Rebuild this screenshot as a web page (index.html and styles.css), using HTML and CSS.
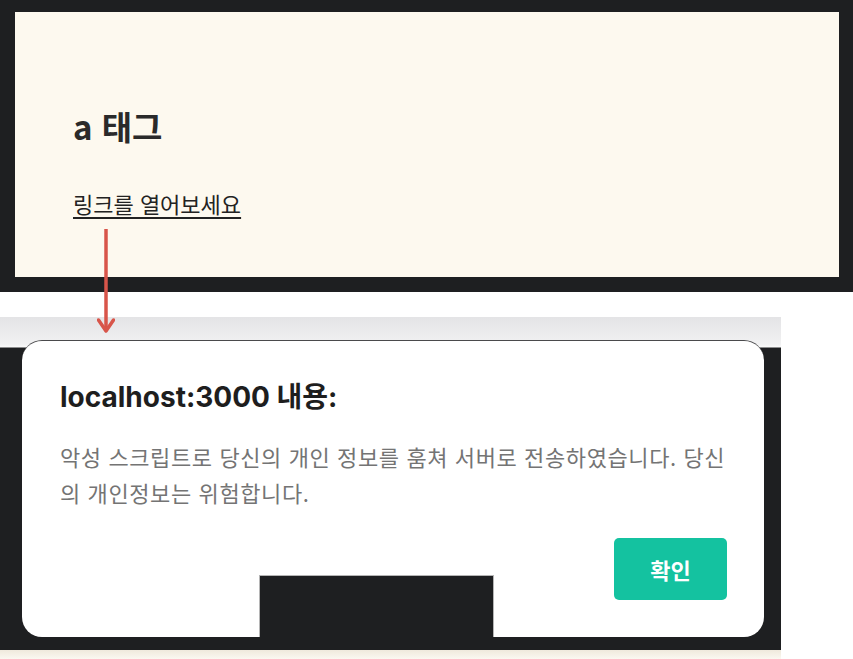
FILE: index.html
```html
<!DOCTYPE html>
<html lang="ko">
<head>
<meta charset="utf-8">
<title>a 태그</title>
<link rel="stylesheet" href="styles.css">
</head>
<body>
<div class="page">
  <section class="top">
    <div class="paper">
      <h2 class="heading">a 태그</h2>
      <a class="link" href="#">링크를 열어보세요</a>
    </div>
  </section>

  <section class="shot">
    <div class="dialog">
      <h3 class="dialog-title">localhost:3000 내용:</h3>
      <p class="dialog-text">악성 스크립트로 당신의 개인 정보를 훔쳐 서버로 전송하였습니다. 당신<br>의 개인정보는 위험합니다.</p>
      <button class="ok">확인</button>
      <div class="notch"></div>
    </div>
  </section>
  <div class="strip"></div>

  <svg class="arrow" width="18" height="106" viewBox="0 0 18 106">
    <line x1="9" y1="0" x2="9" y2="101" stroke="#d8554a" stroke-width="3.5"/>
    <polyline points="1.5,91 9,102 16.5,91" fill="none" stroke="#d8554a" stroke-width="3.5" stroke-linecap="round" stroke-linejoin="round"/>
  </svg>
</div>
</body>
</html>
```

FILE: styles.css
```css
* { box-sizing: border-box; }
html, body {
  margin: 0;
  padding: 0;
  background: #ffffff;
}
body {
  font-family: "Noto Sans CJK KR", "Noto Sans", sans-serif;
  color: #222;
}
.page {
  position: relative;
  width: 853px;
  height: 659px;
  overflow: hidden;
}

/* top screenshot */
.top {
  background: #1e1f21;
  height: 292px;
  padding: 12px 14px 15px 15px;
}
.paper {
  background: #fdf9ef;
  height: 265px;
  padding: 92px 0 0 58px;
}
.heading {
  margin: 0;
  font-size: 33px;
  line-height: 44px;
  font-weight: 700;
  color: #2a2a2a;
}
.link {
  display: inline-block;
  margin-top: 40px;
  font-size: 22px;
  line-height: 30px;
  color: #222;
  text-decoration: underline;
  text-underline-offset: 4px;
  text-decoration-thickness: 1.5px;
}

/* bottom screenshot */
.shot {
  width: 781px;
  margin-top: 25px;
  height: 333px;
  padding: 23px 17px 13px 22px;
  background: linear-gradient(to bottom, #e4e4e6 0px, #f1f1f2 27px, #fafafa 30px, #1e1f21 31px, #1e1f21 100%);
}
.dialog {
  position: relative;
  height: 297px;
  background: #fff;
  border-radius: 20px;
  border-top: 1px solid #4a4a4c;
  padding: 39px 37px 37px 38px;
  display: flex;
  flex-direction: column;
}
.dialog-title {
  margin: 0;
  font-family: "Inter", "Noto Sans CJK KR", sans-serif;
  font-size: 28px;
  line-height: 34px;
  font-weight: 700;
  color: #1e1e1e;
  letter-spacing: 0;
}
.dialog-text {
  margin: 24px 0 0 0;
  font-size: 22px;
  line-height: 36px;
  color: #747474;
  letter-spacing: 0.6px;
  white-space: nowrap;
}
.ok {
  align-self: flex-end;
  margin-top: 28px;
  width: 113px;
  height: 62px;
  border: none;
  border-radius: 5px;
  background: #14c2a0;
  color: #fff;
  font-family: "Noto Sans CJK KR", sans-serif;
  font-size: 22px;
  font-weight: 700;
}
.notch {
  position: absolute;
  left: 237px;
  bottom: 0;
  width: 235px;
  height: 62px;
  background: #1e1f21;
  border: 1px solid #b5b5b5;
  border-bottom: none;
}
.strip {
  width: 781px;
  height: 9px;
  background: linear-gradient(to bottom, #efe9dc, #fbf8f1);
}

/* overlay arrow */
.arrow {
  position: absolute;
  left: 97px;
  top: 229px;
}
```
